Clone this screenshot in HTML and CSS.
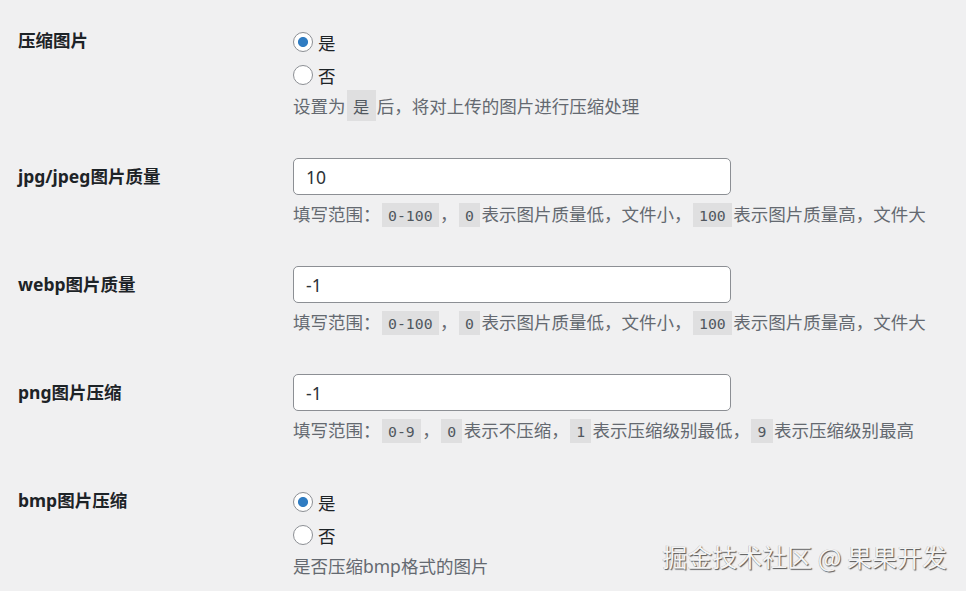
FILE: index.html
```html
<!DOCTYPE html>
<html lang="zh-CN">
<head>
<meta charset="utf-8">
<title>图片压缩设置</title>
<link rel="stylesheet" href="styles.css">
</head>
<body>
<div class="settings">
  <div class="row">
    <div class="row-label">压缩图片</div>
    <div class="row-field">
      <div class="radios">
        <label class="radio-line"><input type="radio" name="compress" class="radio" checked>是</label>
        <label class="radio-line"><input type="radio" name="compress" class="radio">否</label>
      </div>
      <p class="desc">设置为<code class="code code-cjk">是</code>后，将对上传的图片进行压缩处理</p>
    </div>
  </div>

  <div class="row">
    <div class="row-label">jpg/jpeg图片质量</div>
    <div class="row-field">
      <input type="text" class="text-input" value="10">
      <p class="desc">填写范围：<code class="code">0-100</code>，<code class="code">0</code>表示图片质量低，文件小，<code class="code">100</code>表示图片质量高，文件大</p>
    </div>
  </div>

  <div class="row">
    <div class="row-label">webp图片质量</div>
    <div class="row-field">
      <input type="text" class="text-input" value="-1">
      <p class="desc">填写范围：<code class="code">0-100</code>，<code class="code">0</code>表示图片质量低，文件小，<code class="code">100</code>表示图片质量高，文件大</p>
    </div>
  </div>

  <div class="row">
    <div class="row-label">png图片压缩</div>
    <div class="row-field">
      <input type="text" class="text-input" value="-1">
      <p class="desc">填写范围：<code class="code">0-9</code>，<code class="code">0</code>表示不压缩，<code class="code">1</code>表示压缩级别最低，<code class="code">9</code>表示压缩级别最高</p>
    </div>
  </div>

  <div class="row">
    <div class="row-label">bmp图片压缩</div>
    <div class="row-field">
      <div class="radios">
        <label class="radio-line"><input type="radio" name="bmp" class="radio" checked>是</label>
        <label class="radio-line"><input type="radio" name="bmp" class="radio">否</label>
      </div>
      <p class="desc">是否压缩bmp格式的图片</p>
    </div>
  </div>
</div>
<div class="watermark">掘金技术社区 @ 果果开发</div>
</body>
</html>
```

FILE: styles.css
```css
html, body {
  margin: 0;
  padding: 0;
  overflow: hidden;
  background: #f0f0f1;
  height: 591px;
}

body {
  font-family: "Noto Sans", "Noto Sans CJK SC", sans-serif;
  color: #1d2327;
  position: relative;
}

.settings {
  padding: 4px 0 0 18px;
}

.row {
  display: grid;
  grid-template-columns: 275px 1fr;
}

.row-label {
  padding-top: 25px;
  font-size: 17.5px;
  line-height: 22px;
  font-weight: 700;
  color: #1d2327;
}

.row-field {
  padding: 18px 0 22px;
}

.radios {
  display: flex;
  flex-direction: column;
  gap: 9px;
  padding-top: 8px;
}

.radio-line {
  display: flex;
  align-items: center;
  height: 24px;
  font-size: 17.5px;
  color: #1d2327;
}

.radio {
  appearance: none;
  -webkit-appearance: none;
  width: 20px;
  height: 20px;
  margin: 0 5px 0 0;
  border: 1px solid #8c8f94;
  border-radius: 50%;
  background: #fff;
  box-sizing: border-box;
  flex: none;
}

.radio:checked {
  background: radial-gradient(circle at center, #2f7cc2 0, #2f7cc2 4.6px, #fff 5.4px);
}

.text-input {
  display: block;
  box-sizing: border-box;
  width: 438px;
  height: 37px;
  margin: 0;
  padding: 0 12px;
  border: 1px solid #8c8f94;
  border-radius: 5px;
  background: #fff;
  font-family: "Noto Sans", "Noto Sans CJK SC", sans-serif;
  font-size: 17.5px;
  color: #2c3338;
  outline: none;
}

.desc {
  margin: 7px 0 0;
  height: 24px;
  font-size: 17.5px;
  line-height: 24px;
  color: #646970;
  white-space: nowrap;
}

.code {
  font-family: "DejaVu Sans Mono", "Noto Sans CJK SC", monospace;
  font-size: 14.8px;
  line-height: 1;
  padding: 3.75px 6.25px 2.5px;
  margin: 0 1.25px;
  background: rgba(0, 0, 0, 0.07);
  color: #50575e;
}

.code-cjk {
  font-family: "Noto Sans CJK SC", sans-serif;
  font-size: 16.25px;
}

.watermark {
  position: absolute;
  right: 19px;
  top: 542px;
  font-family: "Noto Sans CJK SC", sans-serif;
  font-size: 25px;
  line-height: 28px;
  color: #f4f4f4;
  text-shadow: 1px 1px 1px rgba(0, 0, 0, 0.65), -0.5px -0.5px 0 rgba(0, 0, 0, 0.25);
  white-space: nowrap;
}
```
